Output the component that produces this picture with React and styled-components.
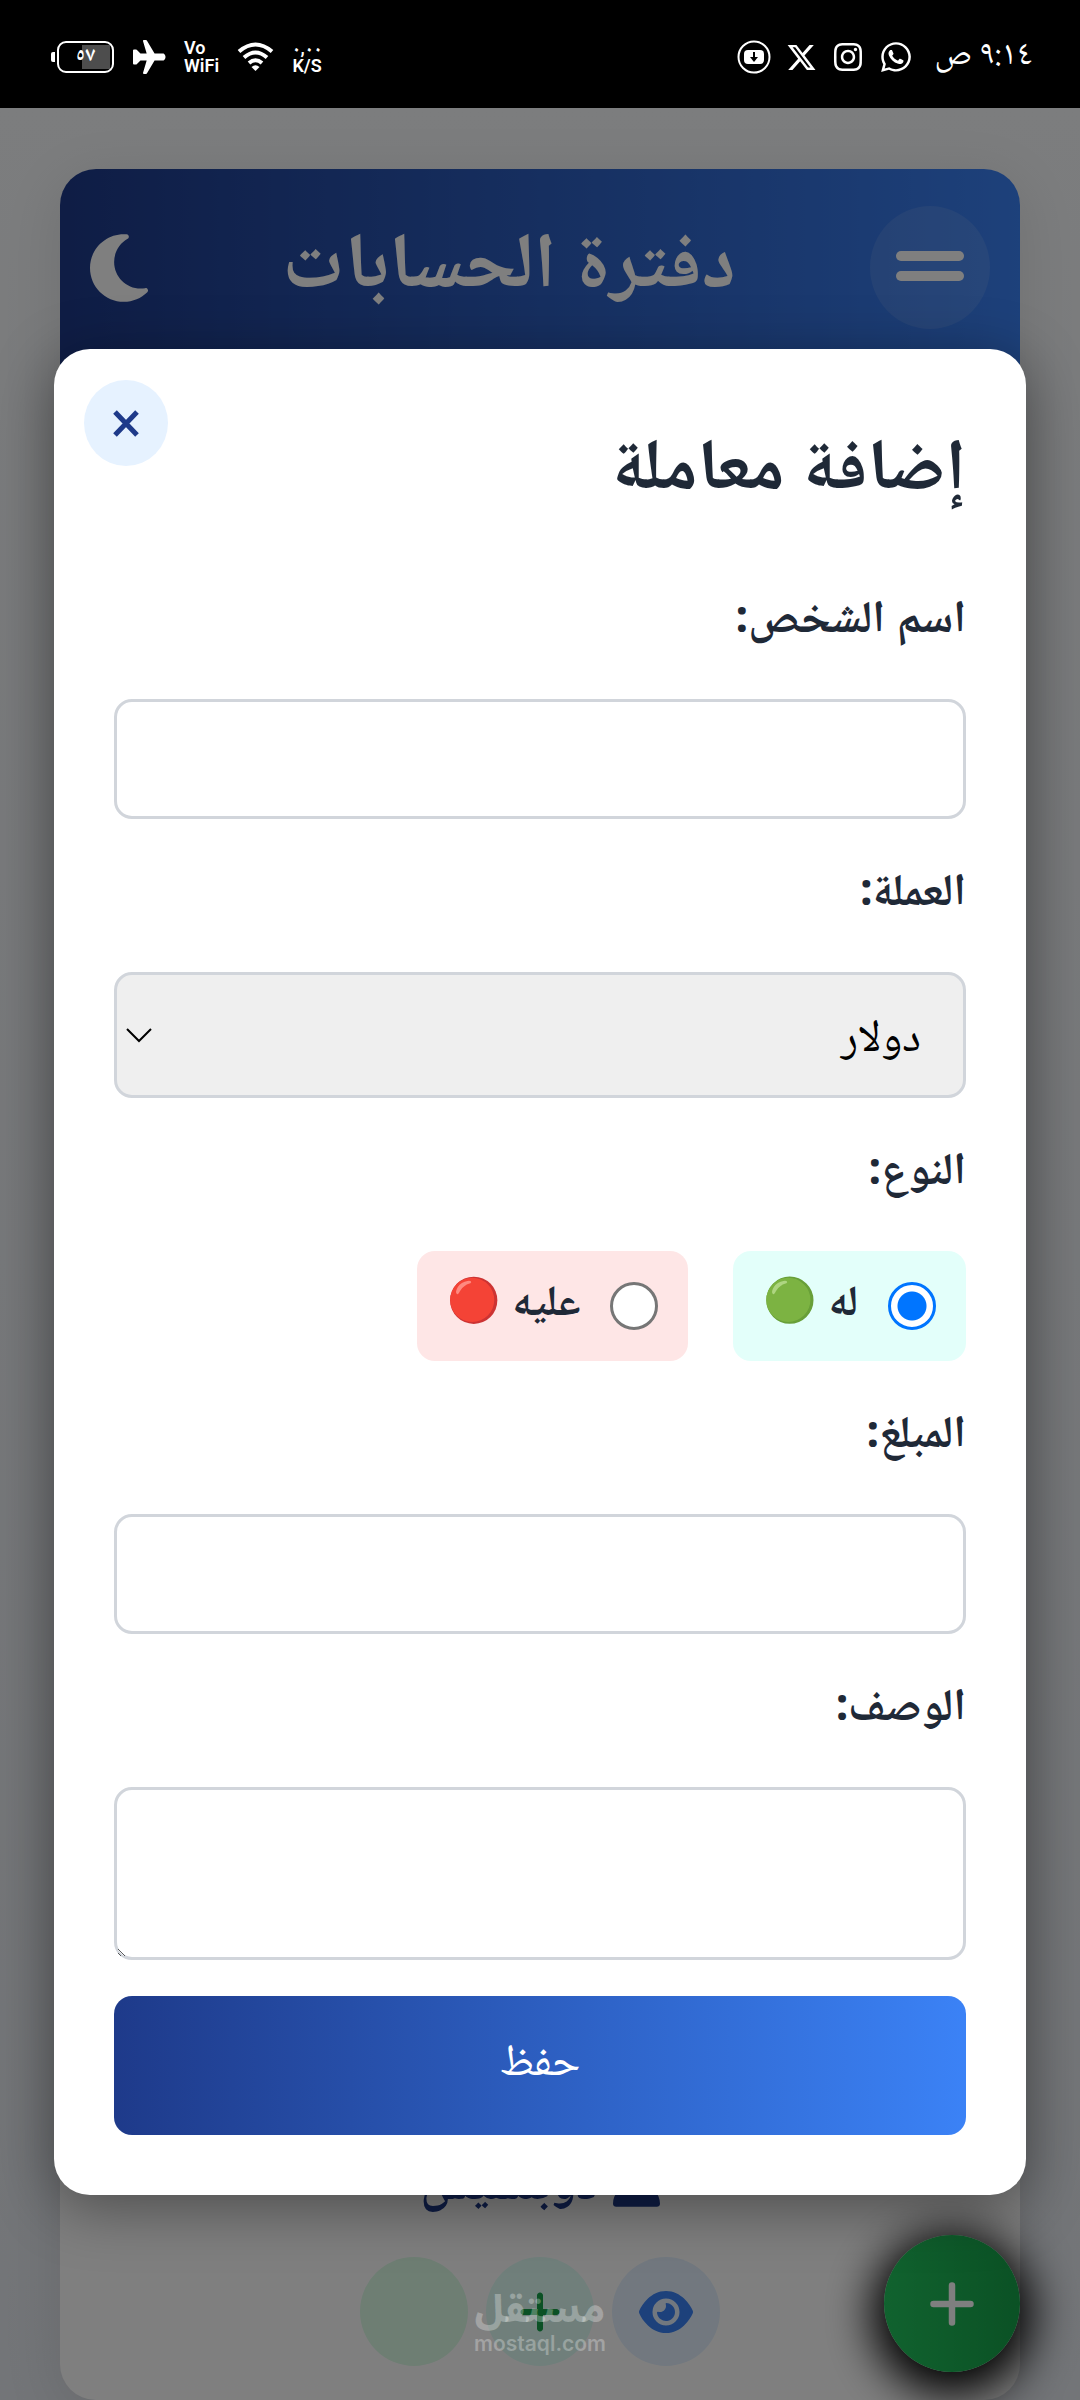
import React from "react";
import styled, { createGlobalStyle } from "styled-components";
import { FaEye, FaMoon, FaPlus, FaUser, FaWhatsapp, FaInstagram, FaXTwitter } from "react-icons/fa6";

const GlobalStyle = createGlobalStyle`
  *, *::before, *::after { box-sizing: border-box; }
  body { margin: 0; }
  button, input, select, textarea { font: inherit; color: inherit; }
`;

const Screen = styled.div`
  display: flex;
  flex-direction: column;
  min-height: 100vh;
  color: #1f2937;
  font-family: "Noto Sans", "Noto Naskh Arabic", sans-serif;
`;

/* ---------- status bar ---------- */

const StatusBar = styled.header`
  display: flex;
  align-items: center;
  justify-content: space-between;
  height: 108px;
  padding: 6px 48px 0 51px;
  background: #000;
  color: #fff;
`;

const StatusGroup = styled.div`
  display: flex;
  align-items: center;
  gap: ${(p) => p.$gap}px;

  svg {
    display: block;
    flex: none;
  }
`;

const Clock = styled.time`
  margin-left: 6px;
  font-family: "Noto Naskh Arabic", sans-serif;
  font-size: 34px;
  line-height: 40px;
`;

const Battery = styled.div`
  display: flex;
  align-items: center;
  gap: 2px;

  &::before {
    content: "";
    width: 4px;
    height: 10px;
    border-radius: 2px 0 0 2px;
    background: #fff;
  }
`;

const BatteryBody = styled.div`
  display: flex;
  align-items: center;
  justify-content: center;
  width: 57px;
  height: 32px;
  border: 2px solid #fff;
  border-radius: 9px;
  background: linear-gradient(#4d4d4d, #4d4d4d) right 2px center / 28px 24px no-repeat;
  font-family: "Noto Naskh Arabic", sans-serif;
  font-size: 20px;
  font-weight: 700;
  line-height: 20px;
`;

const StackedLabel = styled.div`
  font-family: Roboto, "Noto Naskh Arabic", sans-serif;
  font-size: 18px;
  font-weight: 600;
  line-height: 18px;
  text-align: ${(p) => p.$align || "center"};

  span { display: block; }
`;

/* ---------- page behind the dialog ---------- */

const Viewport = styled.div`
  position: relative;
  display: flex;
  flex: 1;
  flex-direction: column;
  overflow: hidden;
  background: linear-gradient(#f8fafc, #e6eaf0);
`;

const Page = styled.main`
  display: flex;
  flex: 1;
  flex-direction: column;
  padding: 61px 60px 0;
`;

const Card = styled.section`
  display: flex;
  flex: 1;
  flex-direction: column;
  overflow: hidden;
  border-radius: 36px;
  background: #fff;
  box-shadow: 0 12px 60px rgba(0, 0, 0, 0.1);
`;

const CardHeader = styled.div`
  display: flex;
  align-items: center;
  justify-content: space-between;
  padding: 37px 30px 36px;
  background: linear-gradient(to right, #1e3a8a, #3b82f6);
  color: #fff;
`;

const CardTitle = styled.h1`
  margin: 0;
  padding-bottom: 20px;
  font-size: 78px;
  font-weight: 700;
  line-height: 103px;
`;

const MenuButton = styled.button`
  display: flex;
  flex-direction: column;
  align-items: center;
  justify-content: center;
  gap: 10px;
  width: 120px;
  height: 123px;
  padding: 0 0 3px;
  border: 0;
  border-radius: 50%;
  background: rgba(255, 255, 255, 0.1);

  span {
    width: 68px;
    height: 10px;
    border-radius: 5px;
    background: #fff;
  }
`;

const ThemeButton = styled.button`
  padding: 0;
  border: 0;
  background: none;
  color: #fff;

  svg { display: block; width: 58px; height: 78px; }
`;

const Person = styled.article`
  display: flex;
  flex-direction: column;
  align-items: center;
  gap: 24px;
  margin-top: auto;
  padding-bottom: 34px;
`;

const PersonName = styled.h2`
  display: flex;
  align-items: center;
  gap: 15px;
  margin: 0;
  color: #1e3a8a;
  font-size: 50px;
  font-weight: 700;
  line-height: 106px;

  svg { width: 47px; height: 54px; }
`;

const Actions = styled.div`
  display: flex;
  gap: 18px;
`;

const ActionButton = styled.button`
  display: flex;
  align-items: center;
  justify-content: center;
  width: 108px;
  height: 109px;
  padding: 0;
  border: 0;
  border-radius: 50%;
  background: ${(p) => p.$bg};
  color: ${(p) => p.$color};

  svg { width: 54px; height: 48px; }
`;

const AddButton = styled.button`
  position: absolute;
  right: 60px;
  bottom: 28px;
  display: flex;
  align-items: center;
  justify-content: center;
  width: 136px;
  height: 137px;
  padding: 0;
  border: 0;
  border-radius: 50%;
  background: linear-gradient(to right, #22c55e, #16a34a);
  color: #fff;
  box-shadow: 0 10px 45px 12px #000;
`;

/* ---------- dialog ---------- */

const Overlay = styled.div`
  position: absolute;
  inset: 0;
  display: flex;
  align-items: flex-start;
  justify-content: center;
  padding-top: 241px;
  background: rgba(0, 0, 0, 0.5);
`;

const Dialog = styled.section`
  position: relative;
  width: 90%;
  padding: 60px;
  border-radius: 36px;
  background: #fff;
  box-shadow: 0 12px 60px rgba(0, 0, 0, 0.4);
`;

const CloseButton = styled.button`
  position: absolute;
  top: 31px;
  left: 30px;
  display: flex;
  align-items: center;
  justify-content: center;
  width: 84px;
  height: 86px;
  padding: 0;
  border: 0;
  border-radius: 50%;
  background: #e6f2ff;
  color: #1e3a8a;
`;

const DialogTitle = styled.h2`
  margin: 0;
  font-size: 72px;
  font-weight: 700;
  line-height: 104px;
`;

const Form = styled.form`
  display: flex;
  flex-direction: column;
  gap: 30px;
  margin-top: 63px;
`;

const Field = styled.div`
  display: flex;
  flex-direction: column;
  gap: 45px;
`;

const Label = styled.label`
  font-size: 45px;
  font-weight: 700;
  line-height: 78px;
`;

const TextInput = styled.input`
  width: 100%;
  height: 120px;
  padding: 0 42px;
  border: 3px solid #d1d5db;
  border-radius: 18px;
  background: #fff;
  font-size: 45px;
`;

const TextArea = styled.textarea`
  display: block;
  width: 100%;
  height: 173px;
  padding: 30px 42px;
  border: 3px solid #d1d5db;
  border-radius: 18px;
  background: #fff;
  font-size: 45px;
  resize: vertical;
`;

const SelectBox = styled.div`
  position: relative;

  svg {
    position: absolute;
    top: 56px;
    left: 12px;
    pointer-events: none;
  }
`;

const Select = styled.select`
  display: block;
  width: 100%;
  height: 126px;
  padding: 0 42px 3px;
  border: 3px solid #d1d5db;
  border-radius: 18px;
  background: #efefef;
  color: #000;
  font-size: 45px;
  appearance: none;
`;

const Options = styled.div`
  display: flex;
  gap: 45px;
`;

const Option = styled.label`
  display: flex;
  align-items: center;
  gap: 30px;
  height: 110px;
  padding: 0 30px;
  border-radius: 18px;
  background: ${(p) => p.$bg};
  font-size: 43px;
  font-weight: 700;
  line-height: 78px;

  span { padding-bottom: 14px; }
`;

const Radio = styled.input`
  appearance: none;
  flex: none;
  width: 48px;
  height: 48px;
  margin: 0;
  border: 3px solid #767676;
  border-radius: 50%;
  background: #fff;

  &:checked {
    border-color: #0075ff;
    background: radial-gradient(circle, #0075ff 14px, #fff 15px);
  }
`;

const SaveButton = styled.button`
  height: 139px;
  margin-top: 6px;
  padding: 0;
  border: 0;
  border-radius: 18px;
  background: linear-gradient(to right, #1e3a8a, #3b82f6);
  color: #fff;
  font-size: 45px;
`;

const Watermark = styled.div`
  position: absolute;
  bottom: 44px;
  left: 50%;
  display: flex;
  flex-direction: column;
  align-items: center;
  transform: translateX(-50%);
  color: rgba(255, 255, 255, 0.28);
  pointer-events: none;

  strong {
    font-family: "Noto Sans Arabic", sans-serif;
    font-size: 38px;
    font-weight: 800;
    line-height: 44px;
  }

  span {
    font-family: Inter, sans-serif;
    font-size: 21px;
    font-weight: 600;
    line-height: 24px;
  }
`;

const DownloadBadge = () => (
  <svg width="34" height="34" viewBox="0 0 34 34" fill="none">
    <circle cx="17" cy="17" r="15.5" stroke="#fff" strokeWidth="2" />
    <rect x="7" y="10" width="20" height="14" rx="4" fill="#fff" />
    <path d="M17 12v6" stroke="#000" strokeWidth="2" />
    <path d="M13 17h8l-4 5z" fill="#000" />
  </svg>
);

const PlaneIcon = () => (
  <svg width="34" height="36" viewBox="0 0 34 36" fill="#fff" stroke="#fff" strokeWidth="2" strokeLinejoin="round">
    <path d="M12 2h2l8 13.500h9.500q2 2.500 0 5H22L14 34h-2l4-13.500H8L4 24.500H2v-13h2l4 4h8z" />
  </svg>
);

const WifiIcon = () => (
  <svg width="37" height="30" viewBox="0 0 37 30" fill="none" stroke="#fff" strokeWidth="4">
    <path d="M2 9.500Q18.500-4.500 35 9.500" />
    <path d="M7 15.500Q18.500 5.500 30 15.500" />
    <path d="M12 21Q18.500 15.500 25 21" />
    <path d="M18.500 29l-4-4q4-3.500 8 0z" fill="#fff" stroke="none" />
  </svg>
);

const CrossIcon = () => (
  <svg width="26" height="27" viewBox="0 0 26 27" stroke="currentColor" strokeWidth="5">
    <path d="M2 2l22 23M24 2L2 25" />
  </svg>
);

const AddIcon = () => (
  <svg width="44" height="44" viewBox="0 0 44 44" stroke="currentColor" strokeWidth="6.5" strokeLinecap="round">
    <path d="M22 3.500v37M3.500 22h37" />
  </svg>
);

const Chevron = () => (
  <svg width="26" height="15" viewBox="0 0 26 15" fill="none" stroke="#000" strokeWidth="2">
    <path d="M1 1l12 12L25 1" />
  </svg>
);

export default function App() {
  return (
    <Screen dir="rtl" lang="ar">
      <GlobalStyle />
      <StatusBar>
        <StatusGroup $gap={15}>
          <Clock>٩:١٤ ص</Clock>
          <FaWhatsapp size={34} />
          <FaInstagram size={32} />
          <FaXTwitter size={31} />
          <DownloadBadge />
        </StatusGroup>
        <StatusGroup $gap={18} dir="ltr">
          <Battery>
            <BatteryBody>٥٧</BatteryBody>
          </Battery>
          <PlaneIcon />
          <StackedLabel $align="left">
            <span>Vo</span>
            <span>WiFi</span>
          </StackedLabel>
          <WifiIcon />
          <StackedLabel>
            <span>٠,٠٠</span>
            <span>K/S</span>
          </StackedLabel>
        </StatusGroup>
      </StatusBar>

      <Viewport>
        <Page>
          <Card>
            <CardHeader>
              <MenuButton aria-label="القائمة">
                <span />
                <span />
              </MenuButton>
              <CardTitle>دفترة الحسابات</CardTitle>
              <ThemeButton aria-label="الوضع الليلي">
                <FaMoon />
              </ThemeButton>
            </CardHeader>
            <Person>
              <PersonName>
                <FaUser />
                دوبلسيس
              </PersonName>
              <Actions>
                <ActionButton $bg="#e4f1ff" $color="#3b82f6" aria-label="عرض">
                  <FaEye />
                </ActionButton>
                <ActionButton $bg="#e0fff7" $color="#16a34a" aria-label="إضافة">
                  <FaPlus />
                </ActionButton>
                <ActionButton $bg="#dcfce7" $color="#16a34a" aria-label="مشاركة" />
              </Actions>
            </Person>
          </Card>
        </Page>
        <AddButton aria-label="إضافة معاملة">
          <AddIcon />
        </AddButton>

        <Overlay>
          <Dialog role="dialog" aria-labelledby="dialog-title">
            <CloseButton aria-label="إغلاق">
              <CrossIcon />
            </CloseButton>
            <DialogTitle id="dialog-title">إضافة معاملة</DialogTitle>
            <Form onSubmit={(e) => e.preventDefault()}>
              <Field>
                <Label htmlFor="person">اسم الشخص:</Label>
                <TextInput id="person" type="text" />
              </Field>
              <Field>
                <Label htmlFor="currency">العملة:</Label>
                <SelectBox>
                  <Select id="currency">
                    <option>دولار</option>
                  </Select>
                  <Chevron />
                </SelectBox>
              </Field>
              <Field role="radiogroup" aria-labelledby="kind">
                <Label as="span" id="kind">النوع:</Label>
                <Options>
                  <Option $bg="#e3fffa">
                    <Radio type="radio" name="kind" defaultChecked />
                    <span>له 🟢</span>
                  </Option>
                  <Option $bg="#fee6e6">
                    <Radio type="radio" name="kind" />
                    <span>عليه 🔴</span>
                  </Option>
                </Options>
              </Field>
              <Field>
                <Label htmlFor="amount">المبلغ:</Label>
                <TextInput id="amount" type="text" inputMode="decimal" />
              </Field>
              <Field>
                <Label htmlFor="note">الوصف:</Label>
                <TextArea id="note" />
              </Field>
              <SaveButton type="submit">حفظ</SaveButton>
            </Form>
          </Dialog>
        </Overlay>

        <Watermark>
          <strong>مستقل</strong>
          <span>mostaql.com</span>
        </Watermark>
      </Viewport>
    </Screen>
  );
}
